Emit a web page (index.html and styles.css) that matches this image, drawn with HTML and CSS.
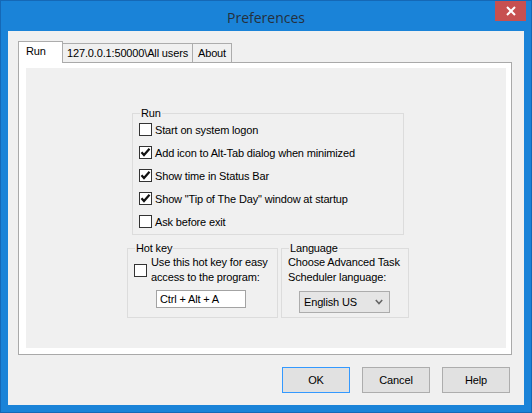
FILE: index.html
```html
<!DOCTYPE html>
<html>
<head>
<meta charset="utf-8">
<link rel="stylesheet" href="styles.css">
</head>
<body>
<div class="window">
  <div class="titlebar">
    <span></span>
    <span class="title">Preferences</span>
    <button class="close" aria-label="Close">
      <svg width="10" height="10" viewBox="0 0 10 10"><path d="M1 1 L9 9 M9 1 L1 9" stroke="#fff" stroke-width="2"/></svg>
    </button>
  </div>
  <div class="client">
    <div class="tabs">
      <div class="tab selected">Run</div>
      <div class="tab t2">127.0.0.1:50000\All users</div>
      <div class="tab t3">About</div>
    </div>
    <div class="panel">
      <div class="inner">
        <div class="groups">
          <fieldset class="group run">
            <legend>Run</legend>
            <div class="rows">
              <label class="row"><span class="cb"></span>Start on system logon</label>
              <label class="row"><span class="cb checked"><svg width="11" height="11" viewBox="0 0 11 11"><path d="M1.5 5.2 L4 8 L9.5 1.8" fill="none" stroke="#111" stroke-width="2.2"/></svg></span>Add icon to Alt-Tab dialog when minimized</label>
              <label class="row"><span class="cb checked"><svg width="11" height="11" viewBox="0 0 11 11"><path d="M1.5 5.2 L4 8 L9.5 1.8" fill="none" stroke="#111" stroke-width="2.2"/></svg></span>Show time in Status Bar</label>
              <label class="row"><span class="cb checked"><svg width="11" height="11" viewBox="0 0 11 11"><path d="M1.5 5.2 L4 8 L9.5 1.8" fill="none" stroke="#111" stroke-width="2.2"/></svg></span>Show "Tip of The Day" window at startup</label>
              <label class="row"><span class="cb"></span>Ask before exit</label>
            </div>
          </fieldset>
          <div class="bottom">
            <fieldset class="group hotkey">
              <legend>Hot key</legend>
              <label class="hk-row"><span class="cb"></span><span class="hk-text">Use this hot key for easy<br>access to the program:</span></label>
              <div class="hk-input">Ctrl + Alt + A</div>
            </fieldset>
            <fieldset class="group lang">
              <legend>Language</legend>
              <div class="lang-text">Choose Advanced Task<br>Scheduler language:</div>
              <div class="select"><span>English US</span><svg width="8" height="6" viewBox="0 0 8 6"><path d="M0.8 1 L4 4.5 L7.2 1" fill="none" stroke="#666" stroke-width="1.6"/></svg></div>
            </fieldset>
          </div>
        </div>
      </div>
    </div>
    <div class="buttons">
      <button class="btn default">OK</button>
      <button class="btn">Cancel</button>
      <button class="btn">Help</button>
    </div>
  </div>
</div>
</body>
</html>
```
FILE: styles.css
```css
* { box-sizing: border-box; }
html, body { margin: 0; padding: 0; }
body {
  width: 532px;
  height: 413px;
  overflow: hidden;
  font-family: "Liberation Sans", Arial, sans-serif;
  font-size: 11px;
  letter-spacing: -0.15px;
  color: #000;
}
.window {
  width: 532px;
  height: 413px;
  background: #1a83d8;
  border: 1px solid #1568b6;
  display: flex;
  flex-direction: column;
}
.titlebar {
  height: 30px;
  display: grid;
  grid-template-columns: 1fr auto 1fr;
  align-items: center;
}
.title {
  font-family: "Open Sans", "Noto Sans", sans-serif;
  font-size: 14px;
  letter-spacing: 0;
  color: #25303c;
  margin-top: 3px;
}
.close {
  justify-self: end;
  align-self: start;
  margin: 0 5px 0 0;
  width: 31px;
  height: 20px;
  border: none;
  padding: 0;
  background: #c75050;
  display: flex;
  align-items: center;
  justify-content: center;
}
.client {
  flex: 1;
  margin: 0 7px 7px 7px;
  background: #f0f0f0;
  padding: 10px 12px 0 10px;
  display: flex;
  flex-direction: column;
}
.tabs {
  display: flex;
  align-items: flex-end;
  height: 21px;
}
.tab {
  height: 19px;
  border: 1px solid #acacac;
  border-bottom: none;
  background: #f0f0f0;
  line-height: 18px;
  text-align: center;
  margin-left: -1px;
  white-space: nowrap;
}
.tab.selected {
  height: 22px;
  margin-left: 0;
  margin-bottom: -1px;
  background: #fff;
  width: 45px;
  text-align: left;
  padding-left: 7px;
  line-height: 19px;
  position: relative;
  z-index: 1;
}
.t2 { width: 131px; }
.t3 { width: 40px; }
.panel {
  width: 494px;
  height: 293px;
  border: 1px solid #a9a9a9;
  background: #fff;
  padding: 5px 5px 6px 7px;
}
.inner {
  width: 100%;
  height: 100%;
  background: #f0f0f0;
  padding: 39px 0 0 101px;
}
.groups {
  width: 282px;
  display: flex;
  flex-direction: column;
}
fieldset.group {
  margin: 0;
  min-width: 0;
  border: 1px solid #dcdcdc;
  padding: 0 0 0 6px;
}
fieldset.group legend {
  padding: 0 1px;
  line-height: 13px;
  margin-left: 1px;
}
.run {
  width: 272px;
  margin-left: 5px !important;
  padding: 3px 0 6px 6px !important;
}
.rows {
  display: flex;
  flex-direction: column;
  gap: 10px;
}
.row {
  display: flex;
  align-items: center;
  height: 13px;
  white-space: nowrap;
}
.cb {
  width: 13px;
  height: 13px;
  border: 1px solid #333;
  background: #fff;
  flex: none;
  margin-right: 3px;
  display: flex;
  align-items: center;
  justify-content: center;
}
.bottom {
  display: flex;
  gap: 3px;
  margin-top: 7px;
}
.hotkey { width: 151px; padding-bottom: 9px !important; }
.lang { width: 128px; padding-bottom: 4px !important; }
.hk-row {
  display: flex;
  align-items: center;
}
.hk-row .cb { margin-right: 4px; }
.hk-text, .lang-text {
  line-height: 15px;
  white-space: nowrap;
}
.hk-input {
  margin: 5px 0 0 22px;
  width: 90px;
  height: 18px;
  border: 1px solid #a3a3a3;
  background: #fff;
  padding-left: 3px;
  line-height: 16px;
}
.select {
  margin: 6px 0 0 11px;
  width: 91px;
  height: 22px;
  border: 1px solid #acacac;
  background: #e5e5e5;
  display: flex;
  align-items: center;
  justify-content: space-between;
  padding: 0 6px 0 4px;
}
.buttons {
  display: flex;
  justify-content: flex-end;
  gap: 12px;
  margin-top: 12px;
  padding-right: 2px;
}
.btn {
  width: 68px;
  height: 26px;
  border: 1px solid #adadad;
  background: #e1e1e1;
  font-family: "Liberation Sans", Arial, sans-serif;
  font-size: 11px;
  letter-spacing: -0.15px;
  color: #000;
  padding: 0;
}
.btn.default { border-color: #3399ff; }
```
